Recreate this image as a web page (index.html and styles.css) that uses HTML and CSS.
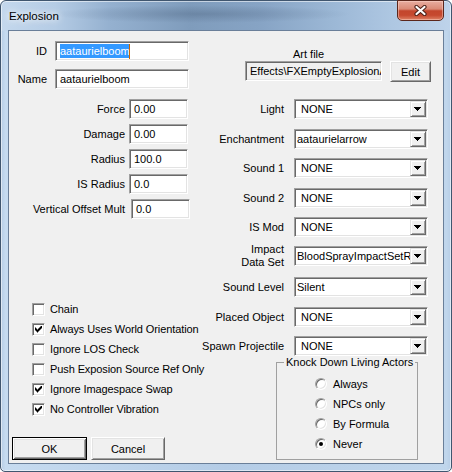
FILE: index.html
```html
<!DOCTYPE html>
<html>
<head>
<meta charset="utf-8">
<title>Explosion</title>
<link rel="stylesheet" href="styles.css">
</head>
<body>
<div class="window">
  <div class="titlebar">
    <span class="title">Explosion</span>
    <div class="close">
      <svg width="13" height="11" viewBox="0 0 13 11">
        <path d="M2.5 2 L10.5 9 M10.5 2 L2.5 9" stroke="#4b2018" stroke-width="4.2" stroke-linecap="round" fill="none"/>
        <path d="M2.5 2 L10.5 9 M10.5 2 L2.5 9" stroke="#fff" stroke-width="2.2" stroke-linecap="round" fill="none"/>
      </svg>
    </div>
  </div>
  <div class="client">
    <div class="top">
      <div class="idblock">
        <div class="row"><span class="lbl lbl-id">ID</span><div class="field field-id"><span class="sel">aataurielboom</span><span class="caret"></span></div></div>
        <div class="row"><span class="lbl lbl-id">Name</span><div class="field field-id">aataurielboom</div></div>
      </div>
      <div class="artblock">
        <div class="art-label">Art file</div>
        <div class="art-row">
          <div class="field field-art">Effects\FXEmptyExplosionA</div>
          <div class="btn btn-edit">Edit</div>
        </div>
      </div>
    </div>
    <div class="middle">
      <div class="leftcol">
        <div class="numfields">
          <div class="row"><span class="lbl lbl-num">Force</span><div class="field field-num">0.00</div></div>
          <div class="row"><span class="lbl lbl-num">Damage</span><div class="field field-num">0.00</div></div>
          <div class="row"><span class="lbl lbl-num">Radius</span><div class="field field-num">100.0</div></div>
          <div class="row"><span class="lbl lbl-num">IS Radius</span><div class="field field-num">0.0</div></div>
          <div class="row"><span class="lbl lbl-num lbl-vom">Vertical Offset Mult</span><div class="field field-num">0.0</div></div>
        </div>
        <div class="checks">
          <div class="check"><span class="cb"></span><span class="check-text">Chain</span></div>
          <div class="check"><span class="cb on"></span><span class="check-text">Always Uses World Orientation</span></div>
          <div class="check"><span class="cb"></span><span class="check-text">Ignore LOS Check</span></div>
          <div class="check"><span class="cb"></span><span class="check-text">Push Exposion Source Ref Only</span></div>
          <div class="check"><span class="cb on"></span><span class="check-text">Ignore Imagespace Swap</span></div>
          <div class="check"><span class="cb on"></span><span class="check-text">No Controller Vibration</span></div>
        </div>
        <div class="buttons">
          <div class="btn btn-ok">OK</div>
          <div class="btn btn-cancel">Cancel</div>
        </div>
      </div>
      <div class="rightcol">
        <div class="combos">
          <div class="combo-row"><span class="lbl lbl-combo">Light</span><div class="combo"><span class="combo-text none">NONE</span><span class="arrow"></span></div></div>
          <div class="combo-row plus1"><span class="lbl lbl-combo">Enchantment</span><div class="combo"><span class="combo-text">aataurielarrow</span><span class="arrow"></span></div></div>
          <div class="combo-row"><span class="lbl lbl-combo">Sound 1</span><div class="combo"><span class="combo-text none">NONE</span><span class="arrow"></span></div></div>
          <div class="combo-row plus1"><span class="lbl lbl-combo">Sound 2</span><div class="combo"><span class="combo-text none">NONE</span><span class="arrow"></span></div></div>
          <div class="combo-row"><span class="lbl lbl-combo">IS Mod</span><div class="combo"><span class="combo-text none">NONE</span><span class="arrow"></span></div></div>
          <div class="combo-row"><span class="lbl lbl-combo lbl-2line">Impact<br>Data Set</span><div class="combo"><span class="combo-text">BloodSprayImpactSetRed</span><span class="arrow"></span></div></div>
          <div class="combo-row plus2"><span class="lbl lbl-combo">Sound Level</span><div class="combo"><span class="combo-text">Silent</span><span class="arrow"></span></div></div>
          <div class="combo-row plus1"><span class="lbl lbl-combo">Placed Object</span><div class="combo"><span class="combo-text none">NONE</span><span class="arrow"></span></div></div>
          <div class="combo-row"><span class="lbl lbl-combo">Spawn Projectile</span><div class="combo"><span class="combo-text none">NONE</span><span class="arrow"></span></div></div>
        </div>
        <fieldset class="group">
          <legend>Knock Down Living Actors</legend>
          <div class="radio-row"><span class="rb"></span><span>Always</span></div>
          <div class="radio-row"><span class="rb"></span><span>NPCs only</span></div>
          <div class="radio-row"><span class="rb"></span><span>By Formula</span></div>
          <div class="radio-row"><span class="rb on"></span><span>Never</span></div>
        </fieldset>
      </div>
    </div>
  </div>
</div>
</body>
</html>
```
FILE: styles.css
```css
* { box-sizing: border-box; }
html, body { margin: 0; padding: 0; }
body {
  width: 452px;
  height: 472px;
  overflow: hidden;
  background: #ffffff;
  font-family: "Liberation Sans", Arial, sans-serif;
  font-size: 11px;
  color: #000;
}

.window {
  width: 452px;
  height: 472px;
  border: 1px solid #40566f;
  border-radius: 6px 6px 5px 5px;
  padding: 0 7px 7px;
  display: flex;
  flex-direction: column;
  box-shadow: inset 0 0 0 1px rgba(255, 255, 255, 0.55);
  background:
    radial-gradient(ellipse 150px 9px at 200px 13px, rgba(70, 92, 120, 0.35), rgba(70, 92, 120, 0)),
    linear-gradient(to right, #c4d8ed 0%, #b5cce5 12%, #95b1d0 24%, #7f9cbc 42%, #87a4c5 58%, #9cb8d6 74%, #aec7e2 87%, #bed3ea 100%) top / 100% 30px no-repeat,
    linear-gradient(to right, #b6cde6, #c6dbf0 1%, #b4cce6 50%, #c0d6ec 99%, #b6cde6);
}

.titlebar {
  flex: none;
  height: 29px;
  display: flex;
  align-items: flex-start;
  justify-content: space-between;
}
.title {
  font-size: 11.5px;
  line-height: 14px;
  margin: 8px 0 0 1px;
  text-shadow: 0 0 6px #fff, 0 0 10px rgba(255, 255, 255, 0.9);
}
.close {
  width: 47px;
  height: 21px;
  margin-top: -1px;
  border: 1px solid #5b261b;
  border-radius: 0 0 5px 5px;
  background: linear-gradient(#e8ada0 0%, #da8a76 42%, #c3462d 52%, #c6492f 75%, #de8266 100%);
  box-shadow: inset 0 0 0 1px rgba(255, 220, 210, 0.45);
  display: flex;
  align-items: center;
  justify-content: center;
}

.client {
  flex: 1;
  border: 1px solid #6a7f99;
  background: #f0f0f0;
  padding-top: 10px;
}

.row { display: flex; align-items: center; }
.lbl { flex: none; white-space: nowrap; }

.field {
  height: 20px;
  border: 1px solid;
  border-color: #a0a0a0 #fff #fff #a0a0a0;
  box-shadow: inset 1px 1px 0 #696969, inset -1px -1px 0 #e3e3e3;
  background: #fff;
  padding: 0 4px;
  display: flex;
  align-items: center;
  white-space: nowrap;
  overflow: hidden;
}

.top { display: flex; }
.idblock { display: flex; flex-direction: column; gap: 8px; }
.lbl-id { width: 38px; text-align: right; margin-right: 8px; }
.field-id { width: 134px; }
.sel { background: #3399ff; color: #fff; line-height: 14px; }
.caret { flex: none; width: 1px; height: 15px; background: #cc6600; margin-left: -1px; }

.artblock { margin-left: 56px; display: flex; flex-direction: column; }
.art-label { margin: 6px 0 0 48px; line-height: 14px; }
.art-row { display: flex; gap: 8px; align-items: flex-start; }
.field-art { width: 137px; background: #f0f0f0; }

.btn {
  background: #f0f0f0;
  border: 1px solid;
  border-color: #fff #696969 #696969 #fff;
  box-shadow: inset 1px 1px 0 #e3e3e3, inset -1px -1px 0 #a0a0a0;
  display: flex;
  align-items: center;
  justify-content: center;
}
.btn-edit { width: 41px; height: 21px; }

.middle { display: flex; margin-top: 10px; }
.leftcol { width: 191px; flex: none; display: flex; flex-direction: column; }
.numfields { display: flex; flex-direction: column; gap: 5px; }
.lbl-num { width: 116px; text-align: right; margin-right: 4px; }
.lbl-vom { margin-right: 6px; }
.field-num { width: 59px; }

.checks { margin-top: 80px; display: flex; flex-direction: column; }
.check { height: 20px; display: flex; align-items: center; padding-left: 23px; }
.check-text { white-space: nowrap; letter-spacing: -0.1px; }
.cb {
  flex: none;
  position: relative;
  width: 13px;
  height: 13px;
  margin-right: 5px;
  background: #fff;
  border: 1px solid;
  border-color: #a0a0a0 #fff #fff #a0a0a0;
  box-shadow: inset 1px 1px 0 #696969, inset -1px -1px 0 #e3e3e3;
}
.cb.on::after {
  content: "";
  position: absolute;
  left: 2px;
  top: 2px;
  width: 7px;
  height: 7px;
  background: #000;
  clip-path: polygon(0 2px, 1px 2px, 1px 3px, 2px 3px, 2px 4px, 3px 4px, 3px 3px, 4px 3px, 4px 2px, 5px 2px, 5px 1px, 6px 1px, 6px 0, 7px 0, 7px 3px, 6px 3px, 6px 4px, 5px 4px, 5px 5px, 4px 5px, 4px 6px, 3px 6px, 3px 7px, 2px 7px, 2px 6px, 1px 6px, 1px 5px, 0 5px);
}

.buttons { margin-top: 18px; display: flex; gap: 4px; padding-left: 3px; }
.btn-ok {
  width: 75px;
  height: 23px;
  border-color: #000;
  box-shadow: inset 1px 1px 0 #fff, inset -1px -1px 0 #696969, inset 2px 2px 0 #e3e3e3, inset -2px -2px 0 #a0a0a0;
}
.btn-cancel { width: 74px; height: 23px; }

.rightcol { flex: 1; display: flex; flex-direction: column; }
.combos { display: flex; flex-direction: column; gap: 9px; }
.combo-row { height: 20px; display: flex; align-items: center; }
.combo-row.plus1 { margin-top: 1px; }
.combo-row.plus2 { margin-top: 2px; }
.lbl-combo { width: 84px; text-align: right; margin-right: 10px; }
.lbl-2line { line-height: 13px; }
.combo {
  flex: none;
  width: 134px;
  height: 20px;
  display: flex;
  align-items: center;
  padding: 0 1px 0 2px;
  background: #fff;
  border: 1px solid;
  border-color: #a0a0a0 #fff #fff #a0a0a0;
  box-shadow: inset 1px 1px 0 #696969, inset -1px -1px 0 #e3e3e3;
}
.combo-text { flex: 1; min-width: 0; overflow: hidden; white-space: nowrap; }
.combo-text.none { padding-left: 4px; }
.arrow {
  flex: none;
  position: relative;
  width: 16px;
  height: 16px;
  background: #f0f0f0;
  border: 1px solid;
  border-color: #e3e3e3 #696969 #696969 #e3e3e3;
  box-shadow: inset 1px 1px 0 #fff, inset -1px -1px 0 #a0a0a0;
}
.arrow::after {
  content: "";
  position: absolute;
  left: 3px;
  top: 5px;
  width: 7px;
  height: 4px;
  background: #000;
  clip-path: polygon(0 0, 7px 0, 7px 1px, 6px 1px, 6px 2px, 5px 2px, 5px 3px, 4px 3px, 4px 4px, 3px 4px, 3px 3px, 2px 3px, 2px 2px, 1px 2px, 1px 1px, 0 1px);
}

.group {
  margin: 0 0 0 76px;
  width: 142px;
  min-width: 0;
  border: 1px solid #a0a0a0;
  padding: 5px 0 5px 7px;
}
.group legend { padding: 0 2px; line-height: 13px; }
.radio-row { height: 20px; display: flex; align-items: center; padding-left: 31px; }
.rb {
  flex: none;
  position: relative;
  width: 12px;
  height: 12px;
  margin-right: 6px;
  border-radius: 50%;
  background: #fff;
  border: 1px solid;
  border-color: #a0a0a0 #fff #fff #a0a0a0;
  box-shadow: inset 1px 1px 0 #696969, inset -1px -1px 0 #e3e3e3;
}
.rb.on::after {
  content: "";
  position: absolute;
  left: 3px;
  top: 3px;
  width: 4px;
  height: 4px;
  border-radius: 50%;
  background: #000;
}
```
